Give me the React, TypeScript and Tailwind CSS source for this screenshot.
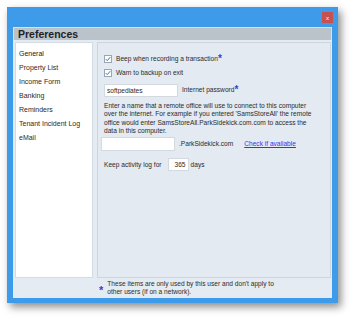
import { useState } from "react";

const navItems = [
  "General",
  "Property List",
  "Income Form",
  "Banking",
  "Reminders",
  "Tenant Incident Log",
  "eMail",
];

const Star = () => (
  <span className="text-[#3b3bd6] text-[10px] leading-[8px] font-bold align-top">*</span>
);

const Check = ({ checked, onClick }: { checked: boolean; onClick: () => void }) => (
  <button
    onClick={onClick}
    className="w-[8px] h-[8px] bg-white border border-[#9aa6b2] flex items-center justify-center shrink-0"
  >
    {checked && (
      <svg viewBox="0 0 8 8" width="6" height="6">
        <path d="M1 4.2 L3 6.2 L7 1.5" fill="none" stroke="#2f6fd0" strokeWidth="1.3" />
      </svg>
    )}
  </button>
);

const App = () => {
  const [beep, setBeep] = useState(true);
  const [warn, setWarn] = useState(true);
  const [selected, setSelected] = useState(0);

  return (
    <div
      className="w-[350px] h-[317px] bg-white pl-[7px] pt-[7px] text-[#2b2b2b]"
      style={{ fontFamily: '"Liberation Sans", Arial, sans-serif' }}
    >
      <div className="w-[331px] h-[296px] bg-[#3d9be9] flex flex-col px-[6px] pb-[5px] shadow-[3px_4px_8px_rgba(0,0,0,0.45)]">
        <div className="h-[20px] flex justify-end items-start pt-[5px] -mr-[1px]">
          <div className="w-[11px] h-[11px] bg-[#c75050] flex items-center justify-center">
            <span className="text-white text-[6px] leading-none">x</span>
          </div>
        </div>

        <div className="flex-1 bg-[#e4ebf2] flex flex-col">
          <div className="h-[13px] bg-[#b9c3c9] border-x border-t border-[#d9e0e6] px-[4px] flex items-center">
            <span className="text-[10.5px] font-bold text-[#1e2226] leading-none">Preferences</span>
          </div>

          <div className="flex gap-[4px] pl-[2px] pr-[1px] pt-[2px] h-[238px]">
            <div className="w-[78px] bg-white border border-[#d4dbe2] pt-[4px] pl-[3px] flex flex-col">
              {navItems.map((item, i) => (
                <div
                  key={item}
                  onClick={() => setSelected(i)}
                  className={`h-[14px] text-[7px] leading-[14px] cursor-default ${
                    selected === i ? "text-[#1a1a1a]" : "text-[#2b2b2b]"
                  }`}
                >
                  {item}
                </div>
              ))}
            </div>

            <div className="flex-1 bg-[#e3eaf2] border border-[#cdd6df] pl-[6px] pt-[11px] text-[6.6px] leading-[8.3px]">
              <div className="flex items-center gap-[4px] h-[10px]">
                <Check checked={beep} onClick={() => setBeep(!beep)} />
                <span>
                  Beep when recording a transaction<Star />
                </span>
              </div>
              <div className="flex items-center gap-[4px] h-[10px] mt-[4px]">
                <Check checked={warn} onClick={() => setWarn(!warn)} />
                <span>Warn to backup on exit</span>
              </div>

              <div className="flex items-center gap-[4px] mt-[6px]">
                <input
                  defaultValue="softpediates"
                  className="w-[74px] h-[13px] bg-white border border-[#d3d9df] px-[2px] text-[6.6px] outline-none"
                />
                <span>
                  Internet password<Star />
                </span>
              </div>

              <p className="mt-[5px] w-[212px]">
                Enter a name that a remote office will use to connect to this computer over the internet.
                For example if you entered 'SamsStoreAll' the remote office would enter
                SamsStoreAll.ParkSidekick.com.com to access the data in this computer.
              </p>

              <div className="flex items-center -ml-[3px] mt-[2px]">
                <input className="w-[74px] h-[14px] bg-white border border-[#d3d9df] outline-none" />
                <span className="ml-[4px]">.ParkSidekick.com</span>
                <a className="ml-[11px] text-[#3535e8] underline cursor-pointer">Check if available</a>
              </div>

              <div className="flex items-center mt-[7px]">
                <span>Keep activity log for</span>
                <input
                  defaultValue="365"
                  className="ml-[6px] w-[21px] h-[13px] bg-white border border-[#d3d9df] text-right pr-[2px] text-[6.6px] outline-none"
                />
                <span className="ml-[2px]">days</span>
              </div>
            </div>
          </div>

          <div className="flex items-center pl-[86px] pt-[2px] gap-[4px]">
            <span className="text-[#3b3bd6] text-[11px] font-bold leading-none mt-[4px]">*</span>
            <div className="text-[6.6px] leading-[8px]">
              These items are only used by this user and don't apply to
              <br />
              other users (if on a network).
            </div>
          </div>
        </div>
      </div>
    </div>
  );
};

export default App;
